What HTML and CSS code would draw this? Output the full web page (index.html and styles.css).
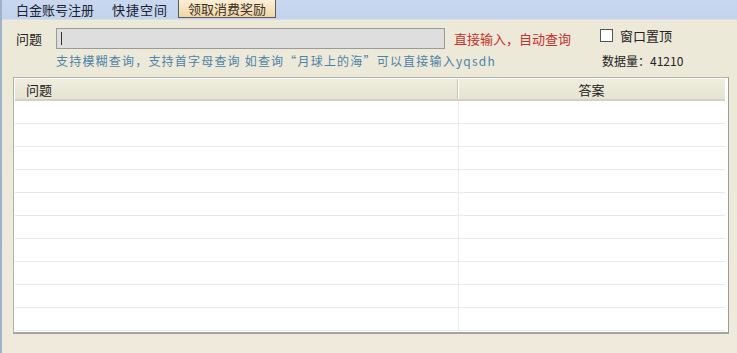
FILE: index.html
```html
<!DOCTYPE html>
<html lang="zh">
<head>
<meta charset="utf-8">
<link rel="stylesheet" href="styles.css">
</head>
<body>
<div class="window">
  <div class="topbar">
    <span class="tab">白金账号注册</span>
    <span class="tab">快捷空间</span>
    <span class="tab active">领取消费奖励</span>
  </div>
  <div class="search">
    <div class="row1">
      <span class="label">问题</span>
      <div class="input"><span class="caret"></span></div>
      <span class="red">直接输入，自动查询</span>
      <label class="check"><span class="box"></span>窗口置顶</label>
    </div>
    <div class="row2">
      <span class="hint">支持模糊查询，支持首字母查询 如查询“月球上的海”可以直接输入yqsdh</span>
      <span class="count">数据量：41210</span>
    </div>
  </div>
  <div class="table">
    <div class="thead">
      <div class="th c1">问题</div>
      <div class="th c2">答案</div>
    </div>
    <div class="tbody">
      <div class="tr"><div class="td c1"></div><div class="td c2"></div></div>
      <div class="tr"><div class="td c1"></div><div class="td c2"></div></div>
      <div class="tr"><div class="td c1"></div><div class="td c2"></div></div>
      <div class="tr"><div class="td c1"></div><div class="td c2"></div></div>
      <div class="tr"><div class="td c1"></div><div class="td c2"></div></div>
      <div class="tr"><div class="td c1"></div><div class="td c2"></div></div>
      <div class="tr"><div class="td c1"></div><div class="td c2"></div></div>
      <div class="tr"><div class="td c1"></div><div class="td c2"></div></div>
      <div class="tr"><div class="td c1"></div><div class="td c2"></div></div>
      <div class="tr last"><div class="td c1"></div><div class="td c2"></div></div>
    </div>
  </div>
</div>
</body>
</html>
```
FILE: styles.css
```css
html, body {
  margin: 0;
  padding: 0;
  background: #ece9d8;
}
body {
  font-family: "Noto Sans CJK SC", "DejaVu Sans", sans-serif;
  font-size: 12px;
  color: #222;
}
.window {
  width: 737px;
  height: 353px;
  box-sizing: border-box;
  border-left: 2px solid #9fb2cc;
  background: linear-gradient(#ece9d8, #efeadc);
  overflow: hidden;
}
.topbar {
  height: 19px;
  background: linear-gradient(#c9d8ef, #c3d3ec);
  display: flex;
  align-items: stretch;
  padding-left: 14px;
  border-bottom: 1px solid #d8dde6;
}
.tab {
  display: flex;
  align-items: center;
  line-height: 1;
  font-size: 13px;
  color: #1b2230;
  margin-right: 18px;
}
.tab:nth-child(2) {
  letter-spacing: 1px;
  margin-right: 14px;
}
.tab.active {
  margin-left: -4px;
  padding: 0 9px;
  height: 18px;
  box-sizing: border-box;
  border: 1px solid #5b5b5b;
  border-top: none;
  background: linear-gradient(#fcefd6, #f1d5a6);
  color: #3a3226;
}
.search {
  padding: 7px 0 0 14px;
}
.row1 {
  display: flex;
  align-items: center;
  height: 22px;
}
.label {
  width: 40px;
  font-size: 13px;
  color: #222;
}
.input {
  width: 389px;
  height: 21px;
  box-sizing: border-box;
  border: 1px solid #9a9a9a;
  background: #dedede;
  display: flex;
  align-items: center;
  padding-left: 4px;
}
.caret {
  width: 1px;
  height: 13px;
  background: #333;
}
.red {
  margin-left: 9px;
  color: #c8302c;
  font-size: 13px;
  width: 146px;
}
.check {
  display: flex;
  align-items: center;
  font-size: 13px;
  color: #222;
  margin-top: -5px;
}
.box {
  width: 11px;
  height: 11px;
  border: 1px solid #555;
  background: #fff;
  margin-right: 7px;
}
.row2 {
  display: flex;
  align-items: center;
  height: 18px;
  margin-top: 2px;
}
.hint {
  margin-left: 40px;
  width: 546px;
  color: #4b82a8;
  font-size: 12px;
  letter-spacing: 1.2px;
}
.count {
  font-size: 12px;
  color: #222;
}
.table {
  margin: 8px 0 0 11px;
  width: 716px;
  height: 257px;
  box-sizing: border-box;
  border: 1px solid #b3b1a8;
  border-right-color: #9c9b96;
  border-bottom: 2px solid #a4a39e;
  background: #fff;
  padding: 1px 3px 0 1px;
}
.thead {
  display: flex;
  height: 20px;
  background: linear-gradient(#efedde, #e6e3d2);
  border-bottom: 2px solid #d3d0bf;
}
.th {
  display: flex;
  align-items: center;
  font-size: 13px;
  color: #222;
}
.th.c1 {
  width: 443px;
  padding-left: 11px;
  box-sizing: border-box;
  border-right: 1px solid #c9c6b6;
  box-shadow: 1px 0 0 #fff;
}
.th.c2 {
  flex: 1;
  justify-content: center;
}
.tr {
  display: flex;
  height: 23px;
  box-sizing: border-box;
  border-bottom: 1px solid #e9e9e6;
}
.td.c1 {
  width: 444px;
  border-right: 1px solid #ececea;
  box-sizing: border-box;
}
.td.c2 {
  flex: 1;
}
```
